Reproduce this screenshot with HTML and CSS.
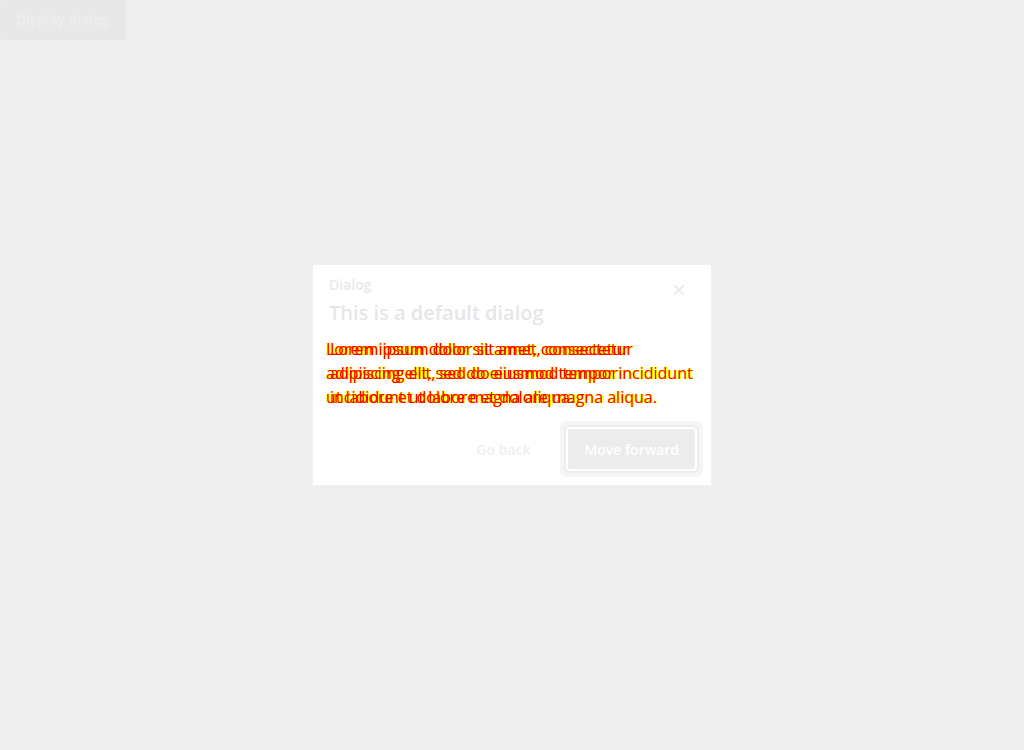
FILE: index.html
```
<!DOCTYPE html>
<html lang="en">
<head>
<meta charset="utf-8">
<meta name="viewport" content="width=device-width, initial-scale=1">
<title>Dialog</title>
<link rel="stylesheet" href="styles.css">
</head>
<body>
<button class="open-button" type="button">Display dialog</button>
<div class="overlay">
  <section class="dialog" role="dialog" aria-modal="true" aria-labelledby="dialog-title">
    <header class="dialog-header">
      <div class="heading">
        <p class="label">Dialog</p>
        <h2 class="title" id="dialog-title">This is a default dialog</h2>
      </div>
      <button class="close" type="button" aria-label="Close">
        <svg width="12" height="12" viewBox="0 0 12 12" aria-hidden="true"><path d="M1 1l10 10M11 1L1 11" fill="none" stroke="currentColor" stroke-width="1.6"/></svg>
      </button>
    </header>
    <div class="dialog-body">
      <p class="copy copy-wide">Lorem ipsum dolor sit amet, consectetur<br>adipiscing elit, sed do eiusmod tempor incididunt<br>ut labore et dolore magna aliqua.</p>
      <p class="copy copy-inset" aria-hidden="true">Lorem ipsum dolor sit amet, consectetur<br>adipiscing elit, sed do eiusmod tempor<br>incididunt ut labore et dolore magna aliqua.</p>
    </div>
    <footer class="dialog-footer">
      <button class="button button-text" type="button">Go back</button>
      <button class="button button-main" type="button">Move forward</button>
    </footer>
  </section>
</div>
</body>
</html>
```
FILE: styles.css
```
* { box-sizing: border-box; }

body {
  margin: 0;
  min-height: 100vh;
  background: #eee;
  font-family: "Open Sans", "Noto Sans", sans-serif;
}

p, h2 { margin: 0; }

button {
  border: 0;
  font: inherit;
}

.open-button {
  height: 40px;
  padding: 0 16px 2px;
  border-radius: 2px;
  background: #e8e8e8;
  color: #eee;
  font-size: 14px;
  font-weight: 600;
}

.overlay {
  position: fixed;
  inset: 0;
  display: grid;
  place-items: center;
}

.dialog {
  width: 100%;
  max-width: 400px;
  border: 1px solid #f0f0f0;
  border-radius: 2px;
  background: #fff;
}

.dialog-header {
  display: flex;
  justify-content: space-between;
  align-items: flex-start;
  padding: 10px 12px 10px 16px;
}

.label {
  color: #e9e9e9;
  font-size: 14px;
  font-weight: 600;
  line-height: 20px;
}

.title {
  margin-top: 4px;
  color: #e6e6e6;
  font-size: 20px;
  font-weight: 600;
  line-height: 28px;
}

.close {
  display: grid;
  place-items: center;
  width: 40px;
  height: 30px;
  padding: 0;
  background: transparent;
  color: #e8e8e8;
}

.dialog-body {
  display: grid;
  padding: 0 13px;
  font-size: 16px;
  line-height: 24px;
  filter: drop-shadow(1px 0 #ff0) drop-shadow(-1px 0 #ff0);
}

.copy {
  grid-area: 1 / 1;
  color: #f00;
  white-space: nowrap;
}

.copy-inset { padding-left: 4px; }

.dialog-footer {
  display: flex;
  justify-content: flex-end;
  gap: 22px;
  padding: 20px 16px 16px;
}

.button {
  height: 40px;
  padding: 0 16px;
  border-radius: 2px;
  font-size: 14px;
  font-weight: 600;
}

.button-text {
  background: transparent;
  color: #efefef;
}

.button-main {
  background: #ececec;
  color: #fff;
  box-shadow: 0 0 0 2px #fff, 0 0 0 4px #ececec, 0 0 0 8px #f5f5f5;
}
```
